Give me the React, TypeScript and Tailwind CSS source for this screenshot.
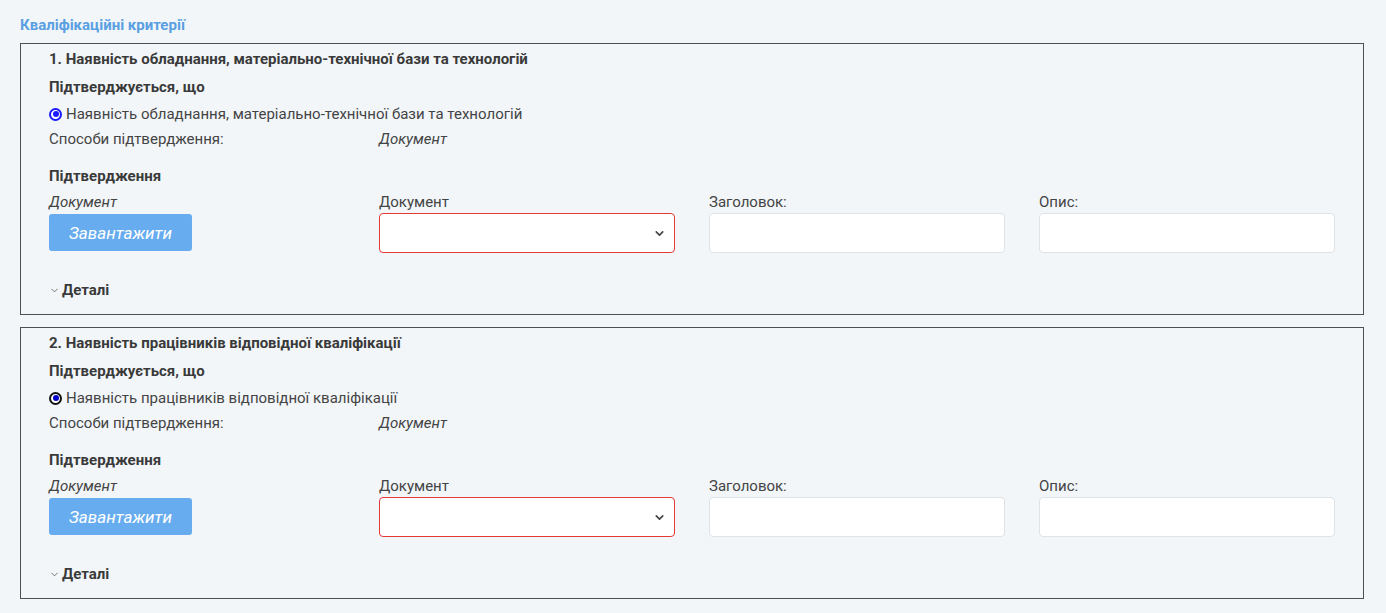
import { ChevronDown } from 'lucide-react';

const criteria = [
  {
    n: 1,
    title: 'Наявність обладнання, матеріально-технічної бази та технологій',
    confirm: 'Наявність обладнання, матеріально-технічної бази та технологій',
    focused: false,
  },
  {
    n: 2,
    title: 'Наявність працівників відповідної кваліфікації',
    confirm: 'Наявність працівників відповідної кваліфікації',
    focused: true,
  },
];

function Radio({ focused }: { focused: boolean }) {
  return (
    <span
      className={`w-[13px] h-[13px] rounded-full border-2 flex items-center justify-center bg-white shrink-0 ${
        focused ? 'border-[#111]' : 'border-[#1a1aff]'
      }`}
    >
      <span className={`w-[6px] h-[6px] rounded-full ${focused ? 'bg-[#0000cc]' : 'bg-[#1a1aff]'}`} />
    </span>
  );
}

function Criterion({ c }: { c: (typeof criteria)[number] }) {
  return (
    <section className="border border-[#4d4f52] px-[28px] pt-[5px] pb-[14px] text-[15px] leading-5 text-[#444]">
      <h3 className="font-bold text-[#3a3a3a]">
        {c.n}. {c.title}
      </h3>
      <div className="mt-[8px] font-bold text-[#3a3a3a]">Підтверджується, що</div>
      <label className="mt-[7px] flex items-center gap-[4px]">
        <Radio focused={c.focused} />
        <span>{c.confirm}</span>
      </label>
      <div className="mt-[5px] grid grid-cols-4 gap-x-[34px]">
        <span>Способи підтвердження:</span>
        <span className="italic">Документ</span>
      </div>

      <div className="mt-[17px] font-bold text-[#3a3a3a]">Підтвердження</div>
      <div className="mt-[6px] grid grid-cols-4 gap-x-[34px]">
        <div>
          <div className="italic">Документ</div>
          <button className="mt-[2px] w-[143px] h-[37px] rounded-[3px] bg-[#67acef] text-white italic text-[17px]">
            Завантажити
          </button>
        </div>
        <div>
          <div>Документ</div>
          <div className="mt-[1px] h-[40px] rounded-[4px] border border-[#e53935] bg-white flex items-center justify-end pr-[8px]">
            <ChevronDown size={13} strokeWidth={3} className="text-[#444]" />
          </div>
        </div>
        <div>
          <div>Заголовок:</div>
          <div className="mt-[1px] h-[40px] rounded-[4px] border border-[#dfe2e6] bg-white" />
        </div>
        <div>
          <div>Опис:</div>
          <div className="mt-[1px] h-[40px] rounded-[4px] border border-[#dfe2e6] bg-white" />
        </div>
      </div>

      <div className="mt-[27px] flex items-center gap-[2px] font-bold text-[#3a3a3a]">
        <ChevronDown size={11} strokeWidth={1.6} className="text-[#444]" />
        <span>Деталі</span>
      </div>
    </section>
  );
}

export default function App() {
  return (
    <div
      className="min-h-screen bg-[#f2f6f9] px-[20px] pt-[15px]"
      style={{ fontFamily: 'Roboto, "Noto Sans", sans-serif' }}
    >
      <h2 className="text-[15px] leading-5 font-bold text-[#5a9fe2] mb-[8px]">Кваліфікаційні критерії</h2>
      <div className="w-[1344px] flex flex-col gap-[12px]">
        {criteria.map((c) => (
          <Criterion key={c.n} c={c} />
        ))}
      </div>
    </div>
  );
}
